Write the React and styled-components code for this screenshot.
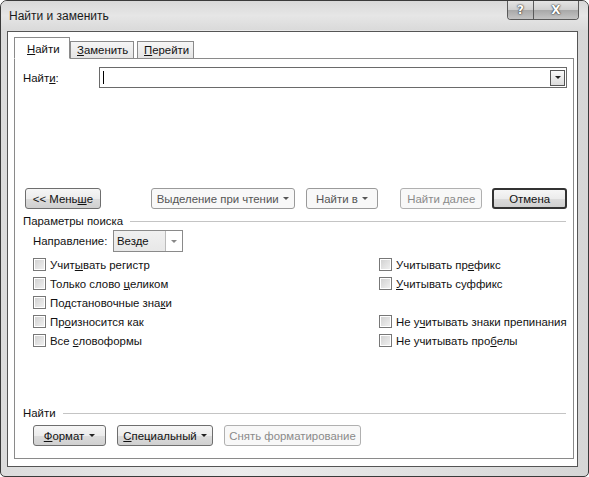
import React from 'react'
import styled, { createGlobalStyle } from 'styled-components'

const Global = createGlobalStyle`
  html, body { margin: 0; padding: 0; background: #fff; }
  body { font-family: "Liberation Sans", Arial, sans-serif; font-size: 11.4px; color: #111; }
`

const Window = styled.div`
  width: 589px;
  height: 477px;
  box-sizing: border-box;
  border: 1px solid #3a3a3a;
  border-radius: 7px 7px 5px 5px;
  background: linear-gradient(90deg, #dcdcdc 0%, #ececec 40%, #d6d6d6 100%);
  display: flex;
  flex-direction: column;
  overflow: hidden;
`

const TitleBar = styled.div`
  height: 29px;
  flex: none;
  display: flex;
  align-items: flex-start;
  padding-left: 8px;
  background: linear-gradient(180deg, #d8d8d8 0%, #e6e6e6 50%, #dadada 100%);
`

const Title = styled.div`
  margin-top: 8px;
  font-size: 12px;
  color: #1a1a1a;
  flex: 1;
`

const Caption = styled.div`
  display: flex;
  margin-right: 9px;
  border: 1px solid #5a5a5a;
  border-top: none;
  border-radius: 0 0 4px 4px;
  overflow: hidden;
`

const CapBtn = styled.div`
  width: ${p => p.$w}px;
  height: 18px;
  display: flex;
  align-items: center;
  justify-content: center;
  background: linear-gradient(180deg, #e4e4e4 0%, #cfcfcf 50%, #a8a8a8 51%, #c4c4c4 100%);
  border-left: ${p => (p.$sep ? '1px solid #5a5a5a' : 'none')};
  font-family: "DejaVu Sans", sans-serif;
  font-weight: bold;
  font-size: 12px;
  color: #fff;
  text-shadow: 0 0 2px #222, 0 0 1px #222;
`

const Client = styled.div`
  flex: 1;
  margin: 1px 10px 9px 6px;
  border: 1px solid #555;
  background: #fff;
  padding: 5px 3px 7px 6px;
  display: flex;
  flex-direction: column;
`

const Tabs = styled.div`
  display: flex;
  align-items: flex-end;
  height: 22px;
  position: relative;
  z-index: 1;
  margin-bottom: -1px;
`

const Tab = styled.div`
  box-sizing: border-box;
  height: ${p => (p.$active ? 22 : 18)}px;
  padding: ${p => (p.$active ? '5px 12px 0 12px' : '2px 6px 0 6px')};
  width: ${p => p.$w}px;
  border: 1px solid #8a8a8a;
  border-bottom: ${p => (p.$active ? '1px solid #fff' : '1px solid #8a8a8a')};
  background: ${p => (p.$active ? '#fff' : 'linear-gradient(180deg, #f6f6f6 0%, #e4e4e4 100%)')};
  margin-left: ${p => p.$ml || 0}px;
  white-space: nowrap;
`

const Panel = styled.div`
  flex: 1;
  border: 1px solid #8a8a8a;
  padding: 8px 6px 0 8px;
  display: flex;
  flex-direction: column;
`

const Row = styled.div`
  display: flex;
  align-items: center;
  margin-top: ${p => p.$mt || 0}px;
  padding-left: ${p => p.$pl || 0}px;
`

const Label = styled.div`
  width: ${p => p.$w || 'auto'};
  flex: none;
  white-space: nowrap;
`

const Combo = styled.div`
  flex: 1;
  height: 21px;
  box-sizing: border-box;
  border: 1px solid #6a6a6a;
  display: flex;
  align-items: center;
  justify-content: space-between;
  padding: 0 1px 0 3px;
`

const Caret = styled.div`
  width: 1px;
  height: 13px;
  background: #000;
`

const ArrowBox = styled.div`
  width: 15px;
  height: 16px;
  box-sizing: border-box;
  border: 1px solid #555;
  background: linear-gradient(180deg, #fafafa, #dcdcdc);
  display: flex;
  align-items: center;
  justify-content: center;
`

const Tri = styled.span`
  width: 0;
  height: 0;
  border-left: 3px solid transparent;
  border-right: 3px solid transparent;
  border-top: 3px solid ${p => p.$c || '#222'};
  display: inline-block;
  flex: none;
  margin-left: ${p => p.$ml || 0}px;
`

const Button = styled.div`
  box-sizing: border-box;
  width: ${p => p.$w}px;
  height: 21px;
  margin-left: ${p => p.$ml || 0}px;
  border-radius: 3px;
  display: flex;
  align-items: center;
  justify-content: center;
  white-space: nowrap;
  border: ${p =>
    p.$def ? '2px solid #333' : p.$dis ? '1px solid #b0b0b0' : p.$plain ? '1px solid #9a9a9a' : '1px solid #6e6e6e'};
  color: ${p => (p.$dis ? '#8a8a8a' : p.$plain ? '#555' : '#111')};
  background: ${p =>
    p.$dis || p.$plain
      ? '#f8f8f8'
      : 'linear-gradient(180deg, #f6f6f6 0%, #ececec 50%, #dcdcdc 51%, #d0d0d0 100%)'};
`

const Group = styled.div`
  display: flex;
  align-items: center;
  white-space: nowrap;
  margin-top: ${p => p.$mt || 0}px;
  &::after {
    content: '';
    flex: 1;
    height: 1px;
    background: #c4c4c4;
    margin-left: 7px;
    margin-right: 1px;
  }
`

const Select = styled.div`
  width: 70px;
  height: 22px;
  box-sizing: border-box;
  border: 1px solid #8a8a8a;
  display: flex;
  align-items: center;
  justify-content: space-between;
  padding-left: 3px;
  background: linear-gradient(180deg, #f0f0f0, #e8e8e8);
`

const SelArrow = styled.div`
  width: 16px;
  height: 20px;
  border-left: 1px solid #bbb;
  background: #fff;
  display: flex;
  align-items: center;
  justify-content: center;
`

const Checks = styled.div`
  display: grid;
  grid-template-columns: 346px 1fr;
  grid-auto-rows: 19px;
  margin-top: 3px;
  padding-left: 10px;
`

const Check = styled.label`
  display: flex;
  align-items: center;
  white-space: nowrap;
  visibility: ${p => (p.$empty ? 'hidden' : 'visible')};
`

const Box = styled.span`
  width: 13px;
  height: 13px;
  margin-right: 4px;
  box-sizing: border-box;
  border: 1px solid #777;
  background: linear-gradient(135deg, #cfcfcf, #f2f2f2);
  box-shadow: inset 0 0 0 1px #fff;
  flex: none;
`

const Spacer = styled.div`
  flex: 1;
`

const Bottom = styled.div`
  height: 12px;
  flex: none;
`

const u = ch => <u>{ch}</u>

const leftChecks = [
  <>Учит{u('ы')}вать регистр</>,
  <>Только слово {u('ц')}еликом</>,
  <>Подстановочные зна{u('к')}и</>,
  <>Пр{u('о')}износится как</>,
  <>Все {u('с')}ловоформы</>,
]

const rightChecks = [
  <>Учитывать пр{u('е')}фикс</>,
  <>{u('У')}читывать суффикс</>,
  null,
  <>Не у{u('ч')}итывать знаки препинания</>,
  <>Не учитывать про{u('б')}елы</>,
]

export default function App() {
  return (
    <>
      <Global />
      <Window>
        <TitleBar>
          <Title>Найти и заменить</Title>
          <Caption>
            <CapBtn $w={25}>?</CapBtn>
            <CapBtn $w={44} $sep>X</CapBtn>
          </Caption>
        </TitleBar>
        <Client>
          <Tabs>
            <Tab $active $w={56}><span>{u('Н')}айти</span></Tab>
            <Tab $w={64}><span>{u('З')}аменить</span></Tab>
            <Tab $w={57} $ml={3}><span>{u('П')}ерейти</span></Tab>
          </Tabs>
          <Panel>
            <Row>
              <Label $w="76px">Найт{u('и')}:</Label>
              <Combo>
                <Caret />
                <ArrowBox><Tri /></ArrowBox>
              </Combo>
            </Row>
            <Row $mt={100}>
              <Button $w={76} $ml={2}><span>&lt;&lt; Мень{u('ш')}е</span></Button>
              <Button $w={144} $ml={50} $plain>
                <span>Выделение при чтении</span><Tri $ml={4} $c="#555" />
              </Button>
              <Button $w={73} $ml={11} $plain>
                <span>Найти в</span><Tri $ml={4} $c="#555" />
              </Button>
              <Button $w={82} $ml={22} $dis>Найти далее</Button>
              <Button $w={75} $ml={10} $def>Отмена</Button>
            </Row>
            <Group $mt={6}>Параметры поиска</Group>
            <Row $mt={3} $pl={10}>
              <Label $w="80px">Направление:</Label>
              <Select>
                Везде
                <SelArrow><Tri $c="#888" /></SelArrow>
              </Select>
            </Row>
            <Checks>
              {leftChecks.map((l, i) => (
                <React.Fragment key={i}>
                  <Check><Box /><span>{l}</span></Check>
                  <Check $empty={!rightChecks[i]}><Box /><span>{rightChecks[i]}</span></Check>
                </React.Fragment>
              ))}
            </Checks>
            <Spacer />
            <Group>Найти</Group>
            <Row $mt={6} $pl={10}>
              <Button $w={73}><span>{u('Ф')}ормат</span><Tri $ml={5} /></Button>
              <Button $w={96} $ml={11}><span>{u('С')}пециальный</span><Tri $ml={4} /></Button>
              <Button $w={137} $ml={11} $dis>Снять форматирование</Button>
            </Row>
            <Bottom />
          </Panel>
        </Client>
      </Window>
    </>
  )
}
